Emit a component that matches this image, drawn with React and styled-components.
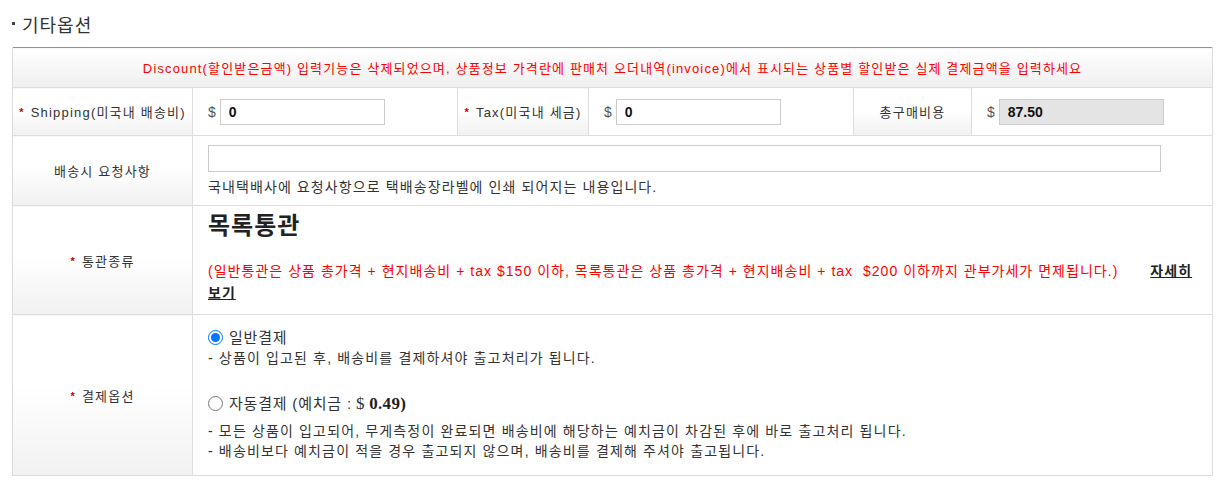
import styled, { createGlobalStyle } from "styled-components";

const GlobalStyle = createGlobalStyle`
  body {
    margin: 0;
    background: #fff;
    font-family: "Liberation Sans", "Noto Sans CJK KR", sans-serif;
    color: #333;
  }
`;

const Page = styled.div`
  padding: 14px 0 0 12px;
`;

const SectionTitle = styled.h3`
  display: flex;
  align-items: center;
  gap: 7px;
  margin: 0 0 8px;
  font-size: 18px;
  letter-spacing: 1px;
  font-weight: normal;
  color: #333;
  line-height: 25px;
  &::before {
    content: "";
    width: 3px;
    height: 3px;
    background: #444;
    margin-top: -7px;
  }
`;

const Table = styled.table`
  width: 1200px;
  border-collapse: collapse;
  border: 1px solid #8d939a;
  table-layout: fixed;
`;

const NoticeCell = styled.td`
  height: 39px;
  text-align: center;
  font-size: 13px;
  letter-spacing: 1.15px;
  color: #f00;
  background: linear-gradient(to bottom, #fff, #efefef);
  border: 1px solid #ddd;
  border-top: none;
  padding: 0;
`;

const Label = styled.th`
  height: ${(p) => p.$h || 47}px;
  font-size: 13px;
  letter-spacing: 1.2px;
  font-weight: normal;
  color: #333;
  text-align: center;
  padding: 0;
  border: 1px solid #ddd;
  background: linear-gradient(to bottom, #fff 45%, #f1f1f1);
`;

const Star = styled.span`
  color: #c00;
  font-size: 11px;
  font-weight: bold;
  margin-right: 6px;
  vertical-align: 1px;
`;

const Cell = styled.td`
  border: 1px solid #ddd;
  padding: ${(p) => p.$pad || "0 15px"};
  vertical-align: ${(p) => p.$valign || "middle"};
  font-size: 13px;
  color: #333;
`;

const Money = styled.div`
  display: flex;
  align-items: center;
  gap: 4px;
  font-size: 14px;
  color: #555;
`;

const MoneyInput = styled.input`
  box-sizing: border-box;
  width: 165px;
  height: 26px;
  border: 1px solid #ccc;
  background: ${(p) => (p.readOnly ? "#e4e4e4" : "#fff")};
  font-family: "Liberation Sans", sans-serif;
  font-size: 14px;
  font-weight: bold;
  color: #111;
  padding: 0 0 0 8px;
  outline: none;
`;

const RequestInput = styled.input`
  display: block;
  box-sizing: border-box;
  width: 953px;
  height: 27px;
  border: 1px solid #ccc;
  margin: 0 0 5px;
`;

const Help = styled.div`
  font-size: 14px;
  letter-spacing: 1.1px;
  color: #333;
  line-height: 20px;
`;

const CustomsTitle = styled.div`
  font-size: 24px;
  letter-spacing: 1px;
  font-weight: bold;
  color: #222;
  line-height: 28px;
  margin: 0 0 20px;
`;

const CustomsNote = styled.div`
  font-size: 14px;
  letter-spacing: 1.03px;
  line-height: 22px;
  color: #f00;
`;

const More = styled.a`
  color: #222;
  font-weight: bold;
  text-decoration: underline;
  margin-left: 32px;
`;

const Option = styled.label`
  display: flex;
  align-items: center;
  gap: 4px;
  font-size: 15px;
  letter-spacing: 0.8px;
  color: #333;
  line-height: 20px;
  margin-top: ${(p) => p.$top || 0}px;
  input {
    margin: 0 2px 0 0;
    width: 15px;
    height: 15px;
  }
`;

const Serif = styled.span`
  font-family: "Liberation Serif", "DejaVu Serif", serif;
  font-size: 17px;
  letter-spacing: 0.3px;
  color: #333;
  b {
    font-family: "Liberation Serif", "DejaVu Serif", serif;
    color: #222;
  }
`;

const Desc = styled.div`
  font-size: 14px;
  letter-spacing: 1.15px;
  line-height: 20px;
  color: #333;
  margin-top: ${(p) => p.$top || 0}px;
`;

function App() {
  return (
    <Page>
      <GlobalStyle />
      <SectionTitle>기타옵션</SectionTitle>
      <Table>
        <colgroup>
          <col style={{ width: 180 }} />
          <col style={{ width: 265 }} />
          <col style={{ width: 131 }} />
          <col style={{ width: 265 }} />
          <col style={{ width: 118 }} />
          <col style={{ width: 241 }} />
        </colgroup>
        <tbody>
          <tr>
            <NoticeCell colSpan={6}>
              Discount(할인받은금액) 입력기능은 삭제되었으며, 상품정보 가격란에 판매처 오더내역(invoice)에서 표시되는 상품별 할인받은 실제 결제금액을 입력하세요
            </NoticeCell>
          </tr>
          <tr>
            <Label>
              <Star>*</Star>Shipping(미국내 배송비)
            </Label>
            <Cell>
              <Money>
                $ <MoneyInput defaultValue="0" />
              </Money>
            </Cell>
            <Label>
              <Star>*</Star>Tax(미국내 세금)
            </Label>
            <Cell>
              <Money>
                $ <MoneyInput defaultValue="0" />
              </Money>
            </Cell>
            <Label>총구매비용</Label>
            <Cell>
              <Money>
                $ <MoneyInput defaultValue="87.50" readOnly />
              </Money>
            </Cell>
          </tr>
          <tr>
            <Label $h={69}>배송시 요청사항</Label>
            <Cell colSpan={5}>
              <RequestInput />
              <Help>국내택배사에 요청사항으로 택배송장라벨에 인쇄 되어지는 내용입니다.</Help>
            </Cell>
          </tr>
          <tr>
            <Label $h={108}>
              <Star>*</Star>통관종류
            </Label>
            <Cell colSpan={5} $pad="6px 15px 8px" $valign="top">
              <CustomsTitle>목록통관</CustomsTitle>
              <CustomsNote>
                (일반통관은 상품 총가격 + 현지배송비 + tax $150 이하, 목록통관은 상품 총가격 + 현지배송비 + tax&nbsp; $200 이하까지 관부가세가 면제됩니다.)
                <More href="#">자세히 보기</More>
              </CustomsNote>
            </Cell>
          </tr>
          <tr>
            <Label $h={160}>
              <Star>*</Star>결제옵션
            </Label>
            <Cell colSpan={5} $pad="10px 15px 12px">
              <Option>
                <input type="radio" name="pay" defaultChecked />
                일반결제
              </Option>
              <Desc>- 상품이 입고된 후, 배송비를 결제하셔야 출고처리가 됩니다.</Desc>
              <Option $top={26}>
                <input type="radio" name="pay" />
                자동결제 (예치금 : <Serif>$ <b>0.49)</b></Serif>
              </Option>
              <Desc $top={7}>- 모든 상품이 입고되어, 무게측정이 완료되면 배송비에 해당하는 예치금이 차감된 후에 바로 출고처리 됩니다.</Desc>
              <Desc>- 배송비보다 예치금이 적을 경우 출고되지 않으며, 배송비를 결제해 주셔야 출고됩니다.</Desc>
            </Cell>
          </tr>
        </tbody>
      </Table>
    </Page>
  );
}

export default App;
